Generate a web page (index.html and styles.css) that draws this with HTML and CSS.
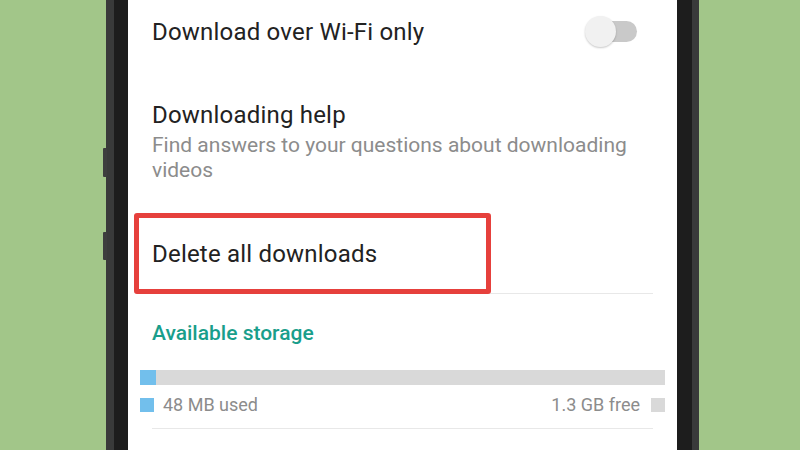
FILE: index.html
```html
<!DOCTYPE html>
<html lang="en">
<head>
<meta charset="utf-8">
<title>Download settings</title>
<link rel="stylesheet" href="styles.css">
</head>
<body>
<div class="stage">
  <div class="phone">
    <span class="side-btn btn-a"></span>
    <span class="side-btn btn-b"></span>
    <div class="bezel">
      <div class="screen">
        <div class="row-toggle">
          <span class="title">Download over Wi-Fi only</span>
          <span class="switch"><span class="track"></span><span class="thumb"></span></span>
        </div>
        <div class="row-help">
          <div class="title">Downloading help</div>
          <div class="subtitle">Find answers to your questions about downloading videos</div>
        </div>
        <div class="row-delete">
          <span class="title">Delete all downloads</span>
          <span class="highlight"></span>
        </div>
        <div class="section-head">Available storage</div>
        <div class="bar"><div class="bar-used" style="width:3%"></div></div>
        <div class="legend">
          <span class="swatch used"></span>
          <span class="legend-text">48 MB used</span>
          <span class="spacer"></span>
          <span class="legend-text">1.3 GB free</span>
          <span class="swatch free"></span>
        </div>
        <div class="divider"></div>
      </div>
    </div>
  </div>
</div>
</body>
</html>
```
FILE: styles.css
```css
* { box-sizing: border-box; }
html, body {
  margin: 0;
  padding: 0;
  width: 800px;
  height: 450px;
  overflow: hidden;
  background: #a2c689;
  font-family: Roboto, "Liberation Sans", sans-serif;
}
.stage {
  display: flex;
  padding-left: 106px;
  height: 450px;
}
.phone {
  position: relative;
  width: 593px;
  height: 450px;
  background: #393a3a;
  padding: 0 7px 0 8px;
}
.side-btn {
  position: absolute;
  left: -3px;
  width: 4px;
  background: #3d3e3e;
  border-radius: 1px;
}
.btn-a { top: 148px; height: 29px; }
.btn-b { top: 232px; height: 28px; }
.bezel {
  height: 100%;
  background: #1d1d1d;
  padding: 0 15px 0 14px;
}
.screen {
  height: 100%;
  background: #ffffff;
  padding: 0 24px;
  display: flex;
  flex-direction: column;
}
.title {
  font-size: 24px;
  line-height: 28px;
  letter-spacing: 0.2px;
  color: #222222;
}
.row-toggle {
  display: flex;
  align-items: center;
  justify-content: space-between;
  height: 64px;
  padding-right: 16px;
}
.switch {
  position: relative;
  width: 52px;
  height: 32px;
}
.track {
  position: absolute;
  right: 0;
  top: 5px;
  width: 40px;
  height: 21px;
  border-radius: 11px;
  background: #c9c9c9;
}
.thumb {
  position: absolute;
  left: 0;
  top: 0;
  width: 31px;
  height: 31px;
  border-radius: 50%;
  background: #f1f1f1;
  box-shadow: 0 1px 2px rgba(0,0,0,0.22);
}
.row-help {
  padding-top: 37px;
}
.subtitle {
  margin-top: 4px;
  font-size: 21px;
  line-height: 25px;
  color: #8c8c8c;
}
.row-delete {
  position: relative;
  margin-top: 30px;
  height: 81px;
  display: flex;
  align-items: center;
  border-bottom: 1px solid #e8e8e8;
  padding-top: 2px;
}
.highlight {
  position: absolute;
  left: -18px;
  top: 0;
  width: 357px;
  height: 81px;
  border: 5px solid #e6403c;
  border-radius: 3px;
}
.section-head {
  margin-top: 26px;
  font-size: 21px;
  line-height: 26px;
  font-weight: 500;
  color: #199e8b;
}
.bar {
  margin: 24px -12px 0;
  height: 15px;
  background: #d9d9d9;
  display: flex;
}
.bar-used {
  background: #72bfec;
}
.legend {
  margin: 9px -12px 0;
  display: flex;
  align-items: center;
  height: 22px;
}
.swatch {
  width: 14px;
  height: 14px;
}
.swatch.used { background: #72bfec; margin-right: 9px; }
.swatch.free { background: #d9d9d9; margin-left: 11px; }
.legend-text {
  font-size: 18px;
  line-height: 22px;
  color: #8c8c8c;
}
.spacer { flex: 1; }
.divider {
  margin-top: 12px;
  height: 1px;
  background: #e8e8e8;
}
```
